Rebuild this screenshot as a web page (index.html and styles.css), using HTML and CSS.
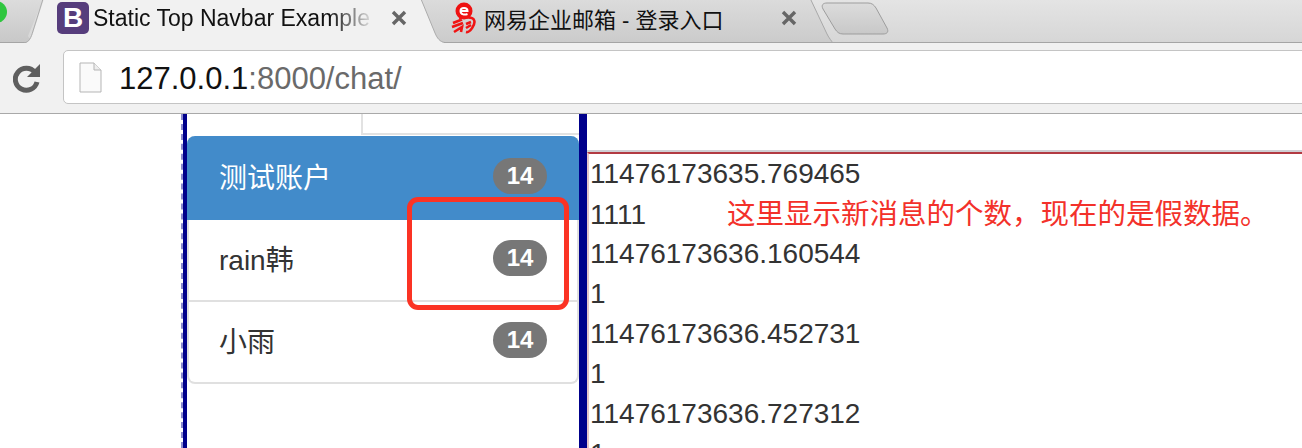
FILE: index.html
```html
<!DOCTYPE html>
<html lang="zh">
<head>
    <meta charset="UTF-8">
    <meta name="viewport" content="width=device-width, initial-scale=1.0">
    <title>Static Top Navbar Example</title>
    <link rel="stylesheet" href="styles.css">
</head>
<body>

<div class="tabstrip">
    <div class="traffic-light"></div>
    <svg class="tab-shapes" width="1302" height="43" viewBox="0 0 1302 43">
        <defs>
            <linearGradient id="tabOff" x1="0" y1="0" x2="0" y2="1">
                <stop offset="0" stop-color="#dcdcdc"/>
                <stop offset="1" stop-color="#c8c8c8"/>
            </linearGradient>
        </defs>
        <path d="M0 42.5H38C33 42.5 31 41 28 36L43 0H-2V42Z" fill="url(#tabOff)" stroke="none"/>
        <path d="M0 42.5H26" stroke="#a5a5a5" fill="none"/>
        <path d="M442 51H838C833 42 830 40 827 34L810 -2H420Z" fill="url(#tabOff)" stroke="#a8a8a8"/>
        <path d="M24 44C30 42 31 38 33 33L44 -1H421L435 33C437 38 440 43 448 44Z" fill="#f1f1f1"/>
        <path d="M43 -1L33 31C31 38 29 42 24 43M421 -1L435 33C437 38 440 42 445 42.5" stroke="#adadad" fill="none"/>
        <path d="M444 42.5H1302" stroke="#a5a5a5" fill="none"/>
        <path d="M827 3H868C872 3 874 5 876 8L887 28C889 32 887 34 883 34H843C839 34 837 32 835 29L823 9C821 5 823 3 827 3Z" fill="url(#tabOff)" stroke="#9d9d9d"/>
    </svg>

    <div class="tab tab-active">
        <span class="favicon-b">B</span>
        <span class="tab-title tab-title-fade">Static Top Navbar Example</span>
        <svg class="tab-close" width="16" height="16" viewBox="0 0 16 16"><path d="M2 2L14 14M14 2L2 14" stroke="#666" stroke-width="3.4"/></svg>
    </div>
    <div class="tab tab-other">
        <svg class="favicon-wy" width="26" height="32" viewBox="0 0 26 32">
            <circle cx="13" cy="9" r="8.5" fill="#ee1111"/>
            <path d="M9 9H16.5C16.5 5 9.500 5 9.500 9C9.500 13 14 13 16.500 12" stroke="#fff" stroke-width="2" fill="none"/>
            <path d="M8 16C14 15 22 15 23 18C25 22 19 31 15 30M2 21L11 17.500M1 25L12 21M3 30L11 25L10 30M15 22L20 20M15 26L20 23" stroke="#f01414" stroke-width="2.600" fill="none"/>
        </svg>
        <span class="tab-title">网易企业邮箱 - 登录入口</span>
        <svg class="tab-close tab-close-other" width="16" height="16" viewBox="0 0 16 16"><path d="M2 2L14 14M14 2L2 14" stroke="#666" stroke-width="3.4"/></svg>
    </div>
</div>

<div class="toolbar">
    <svg class="reload" width="28" height="30" viewBox="0 0 28 30">
        <path d="M22 9.500A11 11 0 1 0 24 19" stroke="#5f5f5f" stroke-width="5" fill="none"/>
        <path d="M27 1V14H14Z" fill="#5f5f5f"/>
    </svg>
    <div class="omnibox">
        <svg class="page-icon" width="23" height="31" viewBox="0 0 23 31">
            <path d="M1 1H15L22 8V30H1Z" fill="#fafafa" stroke="#b5b5b5"/>
            <path d="M15 1V8H22" fill="#eee" stroke="#b5b5b5"/>
        </svg>
        <span class="url"><span class="url-host">127.0.0.1</span>:8000/chat/</span>
    </div>
</div>

<div class="page">
    <div class="gutter"></div>
    <div class="sidebar">
        <div class="sidebar-head"><div class="head-tab"></div></div>
        <ul class="contact-list">
            <li class="contact active">测试账户<span class="badge">14</span></li>
            <li class="contact">rain韩<span class="badge">14</span></li>
            <li class="contact">小雨<span class="badge">14</span></li>
        </ul>
    </div>
    <div class="chat">
        <div class="chat-log">
            <div>11476173635.769465</div>
            <div>1111<span class="note">这里显示新消息的个数，现在的是假数据。</span></div>
            <div>11476173636.160544</div>
            <div>1</div>
            <div>11476173636.452731</div>
            <div>1</div>
            <div>11476173636.727312</div>
            <div>1</div>
        </div>
    </div>
    <div class="callout"></div>
</div>

</body>
</html>
```

FILE: styles.css
```css
html, body {
    margin: 0;
    padding: 0;
    height: 448px;
    overflow: hidden;
    background-color: #fff;
    font-family: "Liberation Sans", "Noto Sans CJK SC", sans-serif;
}
.tabstrip {
    position: relative;
    display: flex;
    height: 43px;
    background: linear-gradient(#e4e4e4, #d6d6d6);
    overflow: hidden;
}
.tab-shapes {
    position: absolute;
    left: 0;
    top: 0;
}
.traffic-light {
    position: absolute;
    left: -15px;
    top: 1px;
    z-index: 1;
    width: 22px;
    height: 22px;
    border-radius: 50%;
    background-color: #2fc63f;
}
.tab {
    position: relative;
    display: flex;
    align-items: center;
    height: 36px;
}
.tab-active {
    width: 394px;
    padding-left: 57px;
}
.tab-other {
    width: 380px;
}
.favicon-b {
    flex: none;
    width: 32px;
    height: 32px;
    border-radius: 5px;
    background-color: #563d7c;
    color: #fff;
    font-size: 28px;
    font-weight: bold;
    line-height: 32px;
    text-align: center;
}
.favicon-wy {
    flex: none;
    margin-right: 7px;
}
.tab-title {
    flex: none;
    margin-left: 4px;
    font-size: 23px;
    color: #111;
    white-space: nowrap;
}
.tab-other .tab-title {
    margin-left: 0;
    font-size: 22px;
}
.tab-title-fade {
    width: 282px;
    overflow: hidden;
    -webkit-mask-image: linear-gradient(to right, #000 84%, transparent 100%);
    mask-image: linear-gradient(to right, #000 84%, transparent 100%);
}
.tab-close {
    flex: none;
    margin-left: 16px;
}
.tab-close-other {
    margin-left: 57px;
}
.toolbar {
    display: flex;
    height: 71px;
    padding-top: 7px;
    padding-left: 13px;
    box-sizing: border-box;
    background-color: #f1f1f1;
    border-bottom: 1px solid #a9a9a9;
}
.reload {
    flex: none;
    margin-top: 13px;
}
.omnibox {
    flex: 1;
    display: flex;
    align-items: center;
    height: 54px;
    margin-left: 22px;
    margin-right: -10px;
    padding-left: 15px;
    box-sizing: border-box;
    background-color: #fff;
    border: 1px solid #c4c4c4;
    border-radius: 5px;
}
.page-icon {
    flex: none;
}
.url {
    margin-left: 17px;
    padding-top: 3px;
    font-size: 31px;
    color: #6a6a6a;
}
.url-host {
    color: #111;
}
.page {
    position: relative;
    display: flex;
    height: 334px;
    overflow: hidden;
}
.gutter {
    flex: none;
    width: 181px;
}
.sidebar {
    flex: none;
    width: 392px;
    border-left: 2px dashed #8b8bd0;
    border-right: 8px solid #00008b;
    box-shadow: inset 4px 0 0 #00008b;
    padding-left: 4px;
}
.sidebar-head {
    height: 21px;
    display: flex;
    justify-content: flex-end;
}
.head-tab {
    width: 216px;
    border-left: 2px solid #e2e2e2;
    border-bottom: 2px solid #e2e2e2;
}
.contact-list {
    margin: 1px 0 0;
    padding: 0;
    list-style: none;
    border: 2px solid #e0e0e0;
    border-top: none;
    border-radius: 8px;
}
.contact {
    display: flex;
    justify-content: space-between;
    align-items: center;
    height: 82px;
    padding: 0 30px 4px 30px;
    font-size: 28px;
    color: #333;
    border-bottom: 2px solid #e0e0e0;
    box-sizing: border-box;
}
.contact:last-child {
    height: 80px;
    border-bottom: none;
}
.contact.active {
    height: 84px;
    margin: 0 -2px;
    padding-left: 32px;
    padding-right: 32px;
    padding-bottom: 4px;
    background-color: #428bca;
    color: #fff;
    border-bottom: none;
    border-radius: 8px 8px 0 0;
}
.badge {
    width: 54px;
    height: 36px;
    border-radius: 18px;
    background-color: #777;
    color: #fff;
    font-size: 24px;
    font-weight: bold;
    line-height: 36px;
    text-align: center;
}
.chat {
    flex: 1;
    margin-top: 38px;
    border-top: 2px solid #b23a42;
    box-shadow: 0 -2px 0 #cfcfd4;
    border-left: 2px solid #e6c5c8;
}
.chat-log {
    padding-left: 1px;
    font-size: 28px;
    line-height: 40px;
    color: #333;
}
.chat-log > div {
    height: 40px;
}
.note {
    margin-left: 81px;
    font-size: 28.5px;
    color: #f3312a;
}
.callout {
    position: absolute;
    left: 407px;
    top: 83px;
    width: 152px;
    height: 103px;
    border: 5px solid #fb3324;
    border-radius: 11px;
}
```
